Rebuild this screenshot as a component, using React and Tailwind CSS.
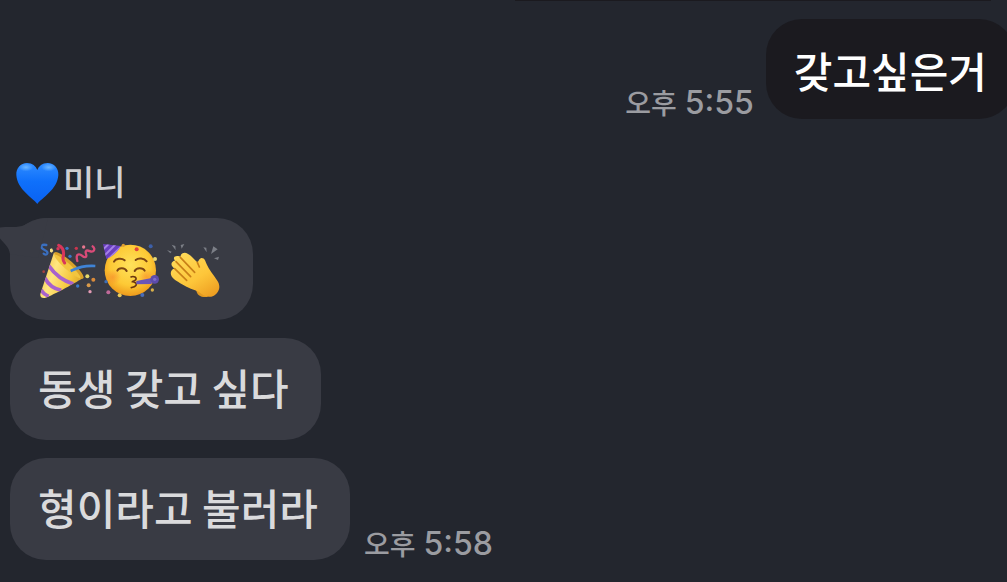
import clsx from "clsx";

const BlueHeart = () => (
  <svg
    role="img"
    aria-label="파란 하트"
    viewBox="50 36 129 129"
    className="size-[43px] shrink-0"
  >
    <defs>
      <linearGradient id="heart" x1="0" y1="0" x2="0" y2="1">
        <stop offset="0" stopColor="#2f8cff" />
        <stop offset="0.45" stopColor="#0f70fb" />
        <stop offset="1" stopColor="#0a62f2" />
      </linearGradient>
      <radialGradient id="heartShine">
        <stop offset="0" stopColor="#6cb6ff" />
        <stop offset="1" stopColor="#6cb6ff" stopOpacity="0" />
      </radialGradient>
    </defs>
    <path
      d="M114 162C101 144 53 118 51 75C50 54 64 39 83 39C99 39 110 49 114 60C118 49 129 39 145 39C164 39 178 54 177 75C175 118 127 144 114 162Z"
      fill="url(#heart)"
    />
    <ellipse cx="80" cy="52" rx="22" ry="12" fill="url(#heartShine)" />
    <ellipse cx="148" cy="52" rx="22" ry="12" fill="url(#heartShine)" />
  </svg>
);

const PartyPopper = () => (
  <svg
    role="img"
    aria-label="폭죽"
    viewBox="12 -3 195 210"
    className="h-[70px] w-[65px] overflow-visible"
  >
    <defs>
      <linearGradient id="cone" x1="0" y1="0.3" x2="1" y2="0.7">
        <stop offset="0" stopColor="#f0b93a" />
        <stop offset="0.35" stopColor="#ffe680" />
        <stop offset="0.7" stopColor="#f5c53a" />
        <stop offset="1" stopColor="#cf9420" />
      </linearGradient>
      <clipPath id="coneClip">
        <path d="M72 52L160 128C146 138 70 180 44 189C34 190 30 185 31 177Z" />
      </clipPath>
    </defs>
    <g clipPath="url(#coneClip)">
      <rect x="20" y="40" width="150" height="155" fill="url(#cone)" />
      <path
        d="M56 92C74 118 100 138 130 147M44 128C54 148 72 162 94 166M33 164C38 174 46 180 56 184"
        stroke="#a862cc"
        strokeWidth="11"
        fill="none"
      />
    </g>
    <ellipse
      cx="117"
      cy="91"
      rx="58"
      ry="13"
      transform="rotate(42 117 91)"
      fill="#d9a22a"
    />
    <ellipse
      cx="112"
      cy="94"
      rx="52"
      ry="9"
      transform="rotate(42 112 94)"
      fill="#f2c53f"
    />
    <path
      d="M49 30C36 27 31 33 36 40C42 47 55 46 52 55C50 60 44 60 41 56"
      stroke="#3a6fc0"
      strokeWidth="7"
      fill="none"
      strokeLinecap="round"
    />
    <path
      d="M86 31C101 38 103 52 99 68C98 75 101 80 104 84"
      stroke="#d9365a"
      strokeWidth="9"
      fill="none"
      strokeLinecap="round"
    />
    <path
      d="M142 78C139 68 139 58 147 58C157 58 158 69 167 66C174 62 162 51 169 47C177 44 182 53 189 49C196 44 192 37 188 34"
      stroke="#d94b78"
      strokeWidth="7"
      fill="none"
      strokeLinecap="round"
    />
    <path
      d="M122 108C143 99 158 91 196 93"
      stroke="#3f83d6"
      strokeWidth="8"
      fill="none"
    />
    <path d="M60 42L66 40L70 48L65 53L60 50Z" fill="#f3e08a" />
    <circle cx="84" cy="41" r="5" fill="#d9365a" />
    <circle cx="111" cy="40" r="5" fill="#3a78c8" />
    <circle cx="120" cy="64" r="5" fill="#3a78c8" />
    <circle cx="161" cy="36" r="5" fill="#e8778f" />
    <circle cx="139" cy="40" r="5" fill="#c9364f" />
    <circle cx="41" cy="110" r="4" fill="#a8403f" />
    <circle cx="172" cy="124" r="6" fill="#e6d96a" />
    <circle cx="190" cy="134" r="6" fill="#d98a3a" />
    <circle cx="176" cy="151" r="6" fill="#d99a4a" />
    <circle cx="143" cy="153" r="5" fill="#3a78c8" />
    <circle cx="180" cy="170" r="5" fill="#e39bb5" />
  </svg>
);

const PartyFace = () => (
  <svg
    role="img"
    aria-label="파티 얼굴"
    viewBox="12 -3 195 210"
    className="h-[70px] w-[65px] overflow-visible"
  >
    <defs>
      <radialGradient id="face" cx="0.5" cy="0.4" r="0.6">
        <stop offset="0" stopColor="#ffe25c" />
        <stop offset="0.65" stopColor="#fdc935" />
        <stop offset="1" stopColor="#ee9a1c" />
      </radialGradient>
      <radialGradient id="cheek">
        <stop offset="0" stopColor="#f57a2c" stopOpacity="0.5" />
        <stop offset="1" stopColor="#f57a2c" stopOpacity="0" />
      </radialGradient>
      <clipPath id="hatClip">
        <path d="M24 27L77 33C70 48 55 62 34 72Z" />
      </clipPath>
    </defs>
    <circle cx="106" cy="106" r="77" fill="url(#face)" />
    <circle cx="54" cy="126" r="24" fill="url(#cheek)" />
    <circle cx="154" cy="126" r="24" fill="url(#cheek)" />
    <g clipPath="url(#hatClip)">
      <rect x="20" y="20" width="65" height="60" fill="#6a3fc0" />
      <path
        d="M24 44L44 24M28 62L64 26M36 76L84 30"
        stroke="#a582e6"
        strokeWidth="6"
      />
    </g>
    <path
      d="M57 80C62 70 80 68 89 76M122 75C130 68 147 69 155 79M67 107C71 97 90 97 95 108M119 108C124 97 144 97 149 107"
      stroke="#7b4514"
      strokeWidth="6"
      fill="none"
      strokeLinecap="round"
    />
    <path
      d="M108 126C116 122 127 128 122 134C119 138 112 139 112 140C118 140 128 145 122 152C119 156 113 157 109 158"
      stroke="#6b3810"
      strokeWidth="5"
      fill="none"
      strokeLinecap="round"
    />
    <path d="M124 138L170 129V147L124 148Z" fill="#6a55b8" />
    <circle cx="179" cy="133" r="13" fill="#5d4bab" />
    <circle cx="179" cy="133" r="5" fill="#7d6cc9" />
    <circle cx="125" cy="43" r="6" fill="#e0443c" />
    <circle cx="85" cy="31" r="5" fill="#e0a030" />
    <circle cx="167" cy="34" r="6" fill="#3d5fa8" />
    <circle cx="180" cy="72" r="6" fill="#e9d873" />
    <circle cx="33" cy="140" r="5" fill="#3d6fb8" />
    <circle cx="40" cy="172" r="6" fill="#c06a9a" />
    <circle cx="74" cy="181" r="6" fill="#e9c95a" />
    <circle cx="142" cy="180" r="6" fill="#4a6cb8" />
    <circle cx="172" cy="165" r="5" fill="#d9b04a" />
  </svg>
);

const ClappingHands = () => (
  <svg
    role="img"
    aria-label="박수"
    viewBox="12 -3 195 210"
    className="h-[70px] w-[65px] overflow-visible"
  >
    <defs>
      <linearGradient id="hand" x1="0.1" y1="0" x2="0.8" y2="1">
        <stop offset="0" stopColor="#ffdc5c" />
        <stop offset="0.6" stopColor="#fdc63a" />
        <stop offset="1" stopColor="#ee9f22" />
      </linearGradient>
    </defs>
    <path
      d="M108 162C110 182 122 187 140 186L170 166L140 130Z"
      fill="#e39a20"
    />
    <path
      d="M112 82C117 78 117 70 125 69C134 69 136 78 140 88C147 105 160 119 172 137C184 155 177 174 160 183C143 190 128 181 117 171C102 164 84 160 66 148C52 138 36 132 33 119C30 108 38 100 44 101C33 94 32 84 38 80C41 77 44 77 47 79C38 70 42 65 48 64C54 62 58 63 61 65C63 54 74 50 83 56C94 62 103 74 112 82Z"
      fill="url(#hand)"
    />
    <path
      d="M61 67L104 112M48 80L92 125M44 101L80 136M112 82L118 96"
      stroke="#c98018"
      strokeWidth="5"
      fill="none"
      strokeLinecap="round"
    />
    <path
      d="M35 29L46 33L47 46ZM62 30L73 27L65 41ZM21 45L35 50L31 55ZM130 37L139 38L140 52ZM160 34L173 43L153 57ZM162 70L177 65L174 75Z"
      fill="#7b7e86"
    />
  </svg>
);

const Time = ({ meridiem, clock }) => (
  <time className="flex items-baseline gap-2 text-[28px] font-medium leading-8 text-[#9b9ca1]">
    <span>{meridiem}</span>
    <span className="font-['Inter',sans-serif] text-[32px]">{clock}</span>
  </time>
);

const Bubble = ({ mine, tail, children }) => (
  <div
    className={clsx(
      "relative flex items-center whitespace-nowrap rounded-[36px] text-[42px] font-medium",
      mine
        ? "h-[100px] bg-[#1b1a1f] pl-7 pr-7 text-white"
        : "h-[102px] bg-[#393b44] text-[#dadadc]",
      tail && "px-6",
      !mine && !tail && "pb-1.5 pl-7 pr-8",
    )}
  >
    {tail && (
      <svg
        viewBox="0 0 50 50"
        className="absolute -left-3 top-0 size-[50px]"
        aria-hidden="true"
      >
        <path
          d="M50 0C38 0 32 5 24 8C16 10 8 8 0 10V18C4 24 11 28 12 36L40 40Z"
          fill="#393b44"
        />
      </svg>
    )}
    {children}
  </div>
);

const App = () => {
  return (
    <main className="min-h-screen overflow-hidden bg-[#23262e] font-['Noto_Sans_CJK_KR',sans-serif]">
      {/* Bottom edge of the previous message */}
      <div className="ml-auto mr-4 h-px w-[476px] bg-[#1b1a1f]"></div>

      {/* Sent */}
      <section className="-mr-2 mt-[18px] flex items-end justify-end gap-3">
        <Time meridiem="오후" clock="5:55" />
        <Bubble mine>갖고싶은거</Bubble>
      </section>

      {/* Received */}
      <section className="mt-10 pl-2.5">
        <h2 className="flex h-12 items-center gap-1 pl-1.5 text-[34px] font-medium text-[#cfcfd2]">
          <BlueHeart />
          <span className="pb-1.5">미니</span>
        </h2>
        <ul className="mt-[11px] flex flex-col gap-[18px]">
          <li className="flex">
            <Bubble tail>
              <PartyPopper />
              <PartyFace />
              <ClappingHands />
            </Bubble>
          </li>
          <li className="flex">
            <Bubble>동생 갖고 싶다</Bubble>
          </li>
          <li className="flex items-end gap-3.5">
            <Bubble>형이라고 불러라</Bubble>
            <Time meridiem="오후" clock="5:58" />
          </li>
        </ul>
      </section>
    </main>
  );
};

export default App;
